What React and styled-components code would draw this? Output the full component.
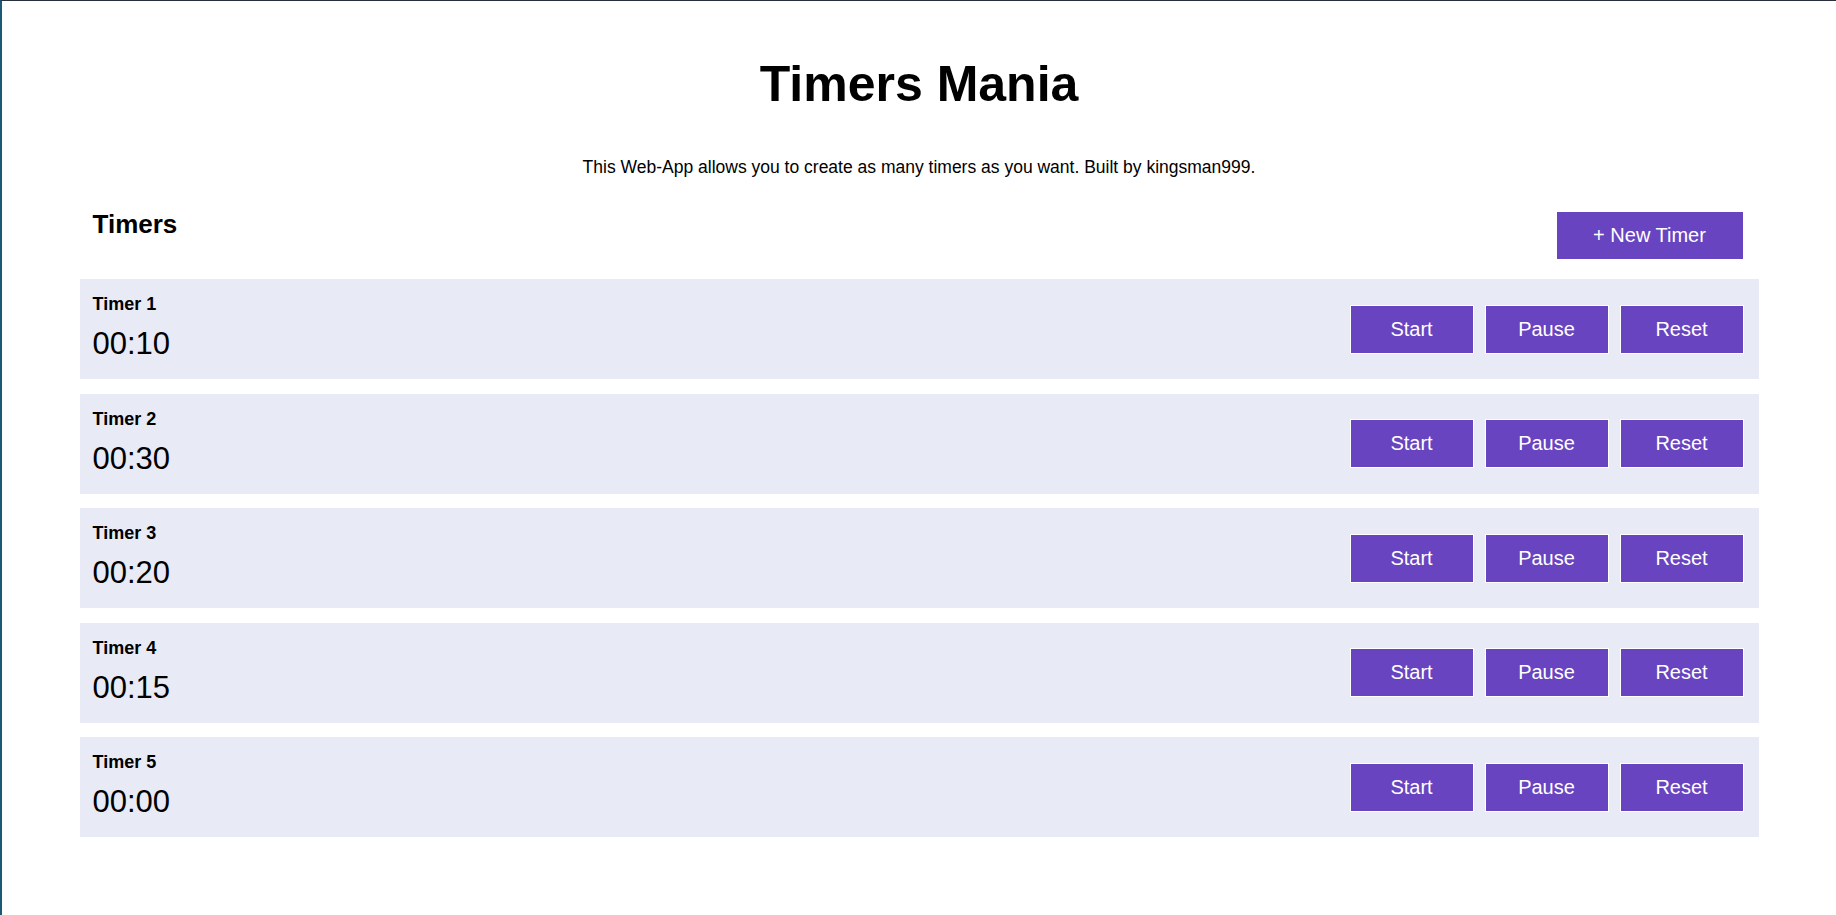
import React, { useState } from 'react';
import styled, { createGlobalStyle } from 'styled-components';

const GlobalStyle = createGlobalStyle`
  * {
    box-sizing: border-box;
  }
  body {
    margin: 0;
    font-family: 'Liberation Sans', Arial, sans-serif;
    color: #000;
    background: #fff;
  }
`;

const initialTimers = [
  { id: 1, name: 'Timer 1', seconds: 10 },
  { id: 2, name: 'Timer 2', seconds: 30 },
  { id: 3, name: 'Timer 3', seconds: 20 },
  { id: 4, name: 'Timer 4', seconds: 15 },
  { id: 5, name: 'Timer 5', seconds: 0 },
];

const format = (s) => {
  const m = String(Math.floor(s / 60)).padStart(2, '0');
  const sec = String(s % 60).padStart(2, '0');
  return `${m}:${sec}`;
};

const App = () => {
  const [timers, setTimers] = useState(initialTimers);

  const addTimer = () => {
    const id = timers.length + 1;
    setTimers([...timers, { id, name: `Timer ${id}`, seconds: 0 }]);
  };

  return (
    <Page>
      <GlobalStyle />
      <Title>Timers Mania</Title>
      <Description>
        This Web-App allows you to create as many timers as you want. Built by kingsman999.
      </Description>
      <Content>
        <Header>
          <Heading>Timers</Heading>
          <Button wide onClick={addTimer}>+ New Timer</Button>
        </Header>
        <List>
          {timers.map((t) => (
            <Card key={t.id}>
              <Info>
                <Label>{t.name}</Label>
                <Time>{format(t.seconds)}</Time>
              </Info>
              <Actions>
                <Button>Start</Button>
                <Button>Pause</Button>
                <Button>Reset</Button>
              </Actions>
            </Card>
          ))}
        </List>
      </Content>
    </Page>
  );
};

const Page = styled.div`
  min-height: 100vh;
  border-top: 1px solid #29303d;
  border-left: 2px solid #1b5a74;
  padding-top: 54px;
`;

const Title = styled.h1`
  margin: 0;
  text-align: center;
  font-size: 50px;
  font-weight: bold;
`;

const Description = styled.p`
  margin: 44px 0 0;
  text-align: center;
  font-size: 17.5px;
`;

const Content = styled.div`
  max-width: 1679px;
  margin: 0 auto;
`;

const Header = styled.div`
  display: flex;
  justify-content: space-between;
  align-items: flex-start;
  margin-top: 31px;
  padding: 0 15px 0 13px;
`;

const Heading = styled.h2`
  margin: 0;
  font-size: 26px;
  font-weight: bold;
`;

const Button = styled.button`
  width: ${(props) => (props.wide ? '188px' : '124px')};
  height: ${(props) => (props.wide ? '49px' : '49px')};
  margin-top: ${(props) => (props.wide ? '2px' : '0')};
  background: #6944c0;
  color: #fff;
  border: 1px solid #fff;
  font-family: 'Liberation Sans', Arial, sans-serif;
  font-size: 20px;
  cursor: pointer;
`;

const List = styled.div`
  display: flex;
  flex-direction: column;
  gap: 14.5px;
  margin-top: 19px;
`;

const Card = styled.div`
  display: flex;
  justify-content: space-between;
  align-items: center;
  height: 100px;
  padding: 0 15px 0 13px;
  background: #e8eaf6;
`;

const Info = styled.div`
  align-self: flex-start;
  display: flex;
  flex-direction: column;
  gap: 11px;
  padding-top: 15px;
`;

const Label = styled.span`
  font-size: 18px;
  font-weight: bold;
`;

const Time = styled.span`
  font-size: 31px;
`;

const Actions = styled.div`
  display: flex;
  gap: 11px;
`;

export default App;
